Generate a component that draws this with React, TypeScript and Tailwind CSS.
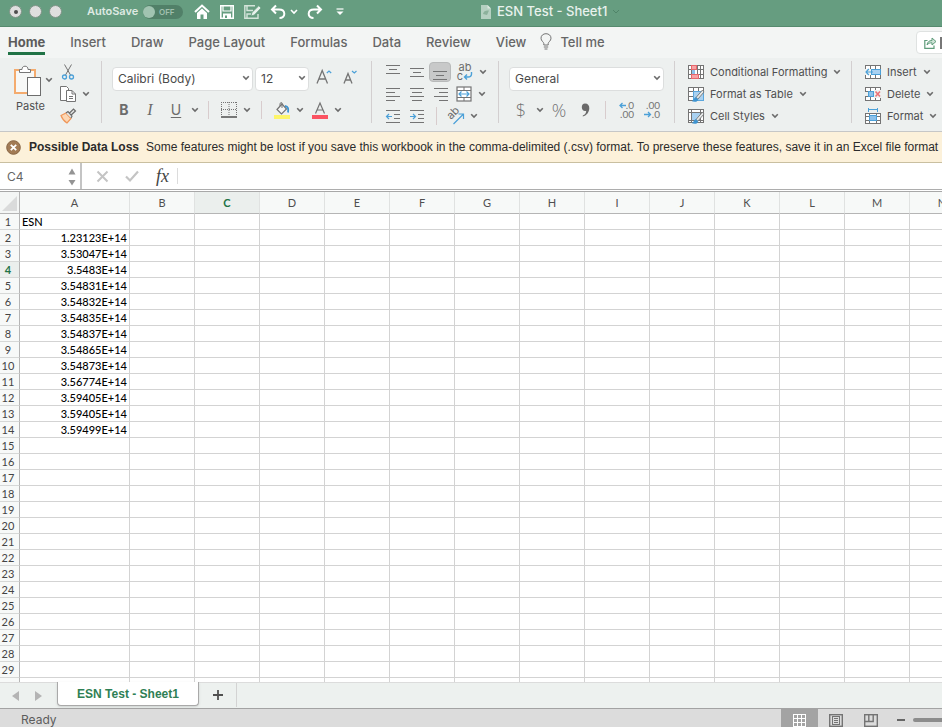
import { useState } from 'react';
import type { ReactNode } from 'react';

const tabs = ['Home', 'Insert', 'Draw', 'Page Layout', 'Formulas', 'Data', 'Review', 'View'];
const columns = ['A', 'B', 'C', 'D', 'E', 'F', 'G', 'H', 'I', 'J', 'K', 'L', 'M', 'N', 'O', 'P', 'Q', 'R', 'S', 'T'];
const values = [
  'ESN', '1.23123E+14', '3.53047E+14', '3.5483E+14', '3.54831E+14', '3.54832E+14', '3.54835E+14',
  '3.54837E+14', '3.54865E+14', '3.54873E+14', '3.56774E+14', '3.59405E+14', '3.59405E+14', '3.59499E+14',
];
const rowCount = 40;

const Icon = ({ w = 16, h = 16, children }: { w?: number; h?: number; children: ReactNode }) => (
  <svg width={w} height={h} viewBox={`0 0 ${w} ${h}`} fill="none" stroke="#747474" strokeWidth="1" className="shrink-0 overflow-visible" aria-hidden="true">
    {children}
  </svg>
);

const Chevron = () => (
  <Icon w={8} h={6}>
    <path d="M1.2 1.3 L4 4.1 L6.8 1.3" stroke="#6b6b6b" strokeWidth="1.6" />
  </Icon>
);

const MenuButton = ({ label }: { label: string }) => (
  <button aria-label={label} className="flex h-5 w-[14px] shrink-0 items-center justify-center">
    <Chevron />
  </button>
);

const Tool = ({ label, className = 'w-6', children }: { label: string; className?: string; children: ReactNode }) => (
  <button aria-label={label} className={`flex h-5 shrink-0 items-center justify-center rounded-sm ${className}`}>
    {children}
  </button>
);

const Divider = () => <div className="h-[62px] w-px shrink-0 bg-[#d3cfd0]" />;
const SmallDivider = ({ className = '' }: { className?: string }) => (
  <div className={`h-[18px] w-px shrink-0 bg-[#d8cccd] ${className}`} />
);

const Dropdown = ({ label, value, className }: { label: string; value: string; className: string }) => (
  <div className={`relative shrink-0 ${className}`}>
    <select aria-label={label} className="h-6 w-full appearance-none rounded-sm border border-[#dcdede] bg-white pl-[5px] text-[12px] text-[#4a4a4a]">
      <option>{value}</option>
    </select>
    <span className="pointer-events-none absolute right-[3px] top-[10px]">
      <Chevron />
    </span>
  </div>
);

const Lines = ({ rows }: { rows: [number, number, number][] }) => (
  <Icon>
    {rows.map(([y, x1, x2]) => (
      <path key={y} d={`M${x1} ${y + 0.5}H${x2}`} />
    ))}
  </Icon>
);

const IndentIcon = ({ out = false }: { out?: boolean }) => (
  <Icon>
    <path d="M1 2.5H15M9 6.5H15M9 10.5H15M1 14.5H15" />
    <path d={out ? 'M7 8.5H1.5M4 6L1.5 8.5L4 11' : 'M1 8.5H6.5M4 6L6.5 8.5L4 11'} stroke="#4ba0d8" strokeWidth="1.2" />
  </Icon>
);

const SheetGrid = () => (
  <>
    <rect x="0.5" y="1.5" width="15" height="13" fill="#fff" />
    <path d="M5.5 1.5V14.5M10.5 1.5V14.5M0.5 5.5H15.5M0.5 10.5H15.5" />
  </>
);

const StylePen = () => (
  <>
    <path d="M14.5 4 L8 11.5 L9.8 13.2 L16 6 Z" fill="#e6e9e9" stroke="#747474" strokeWidth="0.9" />
    <path d="M8 11.5 C6 11.4 6.4 14.3 4.3 15 C7 16 10 15.4 9.9 13.2 Z" fill="#3e94d0" stroke="#3e94d0" strokeWidth="0.6" />
  </>
);

const ConditionalIcon = () => (
  <Icon>
    <rect x="0.5" y="1.5" width="15" height="13" fill="#fff" />
    <path d="M3.5 1.5V14.5M9.5 1.5V14.5M12.5 1.5V14.5M0.5 5.5H15.5M0.5 10.5H15.5" />
    <rect x="3.5" y="1.5" width="5" height="4" fill="#f6a3a5" stroke="#e8666b" />
    <rect x="4" y="6" width="3" height="4" fill="#8dc1ea" stroke="none" />
    <rect x="3.5" y="10.5" width="7" height="4" fill="#f6a3a5" stroke="#e8666b" />
  </Icon>
);

const TableIcon = () => (
  <Icon>
    <SheetGrid />
    <rect x="5.5" y="5.5" width="10" height="9" fill="#a9d1f1" stroke="#5ba6dc" />
    <StylePen />
  </Icon>
);

const CellStylesIcon = () => (
  <Icon>
    <rect x="0.5" y="1.5" width="15" height="13" fill="#fff" />
    <path d="M3.5 1.5V14.5M12.5 1.5V14.5M0.5 4.5H15.5M0.5 12.5H15.5" />
    <rect x="3.5" y="4.5" width="9" height="8" fill="#a9d1f1" stroke="#747474" />
    <StylePen />
  </Icon>
);

const InsertIcon = () => (
  <Icon>
    <SheetGrid />
    <rect x="0" y="5" width="7" height="6" fill="#eef1f0" stroke="none" />
    <rect x="6.5" y="5.5" width="9" height="5" fill="#a9d1f1" stroke="#4ba0d8" />
    <path d="M8 8H1M3.8 5L1 8L3.8 11" stroke="#4ba0d8" strokeWidth="1.2" />
  </Icon>
);

const DeleteIcon = () => (
  <Icon>
    <SheetGrid />
    <rect x="9" y="4" width="7" height="8" fill="#eef1f0" stroke="none" />
    <path d="M0 5.5H8.5V10.5H0" fill="#eef1f0" />
    <rect x="3.5" y="5.5" width="5" height="5" fill="#8dc1ea" stroke="#4ba0d8" />
    <path d="M10.5 5.5L15 10.5M15 5.5L10.5 10.5" stroke="#ec7378" strokeWidth="1.6" />
  </Icon>
);

const FormatIcon = () => (
  <Icon>
    <path d="M3.5 0V4M12.5 0V4M3.5 1.5H12.5" stroke="#4ba0d8" />
    <rect x="0.5" y="5.5" width="15" height="10" fill="#fff" />
    <path d="M4.5 5.5V15.5M11.5 5.5V15.5M0.5 8.5H15.5M0.5 12.5H15.5" />
    <rect x="4.5" y="7.5" width="7" height="5" fill="#8dc1ea" stroke="#4ba0d8" />
  </Icon>
);

const LabeledMenu = ({ label, icon }: { label: string; icon: ReactNode }) => (
  <button className="flex h-[22px] items-center gap-[6px] text-[11px] text-[#4f4f4f]">
    {icon}
    <span>{label}</span>
    <Chevron />
  </button>
);

const TitleBar = ({ autoSave, onToggle }: { autoSave: boolean; onToggle: () => void }) => (
  <header className="flex h-[27px] shrink-0 items-center border-b border-[#568a6e] bg-[#669d80] pb-[3px] text-white">
    <div className="flex shrink-0 gap-[7px] pl-[9px]">
      {['Close', 'Minimize', 'Zoom'].map((name) => (
        <button key={name} aria-label={name} className="flex size-[13px] items-center justify-center rounded-full border border-[#7f9487] bg-[#dedfde]">
          {name === 'Close' && <span className="size-1 rounded-full bg-[#4d4d4d]" />}
        </button>
      ))}
    </div>
    <label className="ml-[25px] flex shrink-0 items-center gap-[6px] text-[11px] font-semibold text-[#dfeae3]">
      <span className="w-[50px]">AutoSave</span>
      <input type="checkbox" className="sr-only" checked={autoSave} onChange={onToggle} />
      <span className="flex h-[14px] w-10 items-center gap-1 rounded-full bg-[#518068] text-[8px] font-semibold text-[#a1c0af]">
        <span className="size-3 rounded-full bg-[#a1c4b1]" />
        {autoSave ? 'ON' : 'OFF'}
      </span>
    </label>
    <div className="ml-[11px] flex shrink-0 items-center">
      <button aria-label="Home" className="w-[25px]">
        <Icon>
          <path d="M1 8L8 1.5L15 8" stroke="#fff" strokeWidth="2" />
          <path d="M3 9L8 4.5L13 9V15H9.5V10.5H6.5V15H3Z" fill="#fff" stroke="none" />
        </Icon>
      </button>
      <button aria-label="Save" className="w-6">
        <Icon>
          <path d="M1.8 1.8H14.2V14.2H1.8Z" stroke="#fff" strokeWidth="1.6" />
          <path d="M4 2V7H12V2" stroke="#fff" strokeWidth="1.2" />
          <path d="M4 9.5H12V15H4Z" fill="#fff" stroke="none" />
          <path d="M6 11.5H8V14H6Z" fill="#669d80" stroke="none" />
        </Icon>
      </button>
      <button aria-label="Save and edit" className="w-[27px]">
        <Icon w={19}>
          <path d="M12 1.8H1.8V14.2H15V10M4 2V6.5H10M4 14V10H8" stroke="#d4e4da" strokeWidth="1.4" />
          <path d="M8 12L9 8.5L15.8 1.8L18 4L11.3 11Z" fill="#e8f1ec" stroke="#669d80" strokeWidth="0.7" />
        </Icon>
      </button>
      <button aria-label="Undo" className="w-5">
        <Icon>
          <path d="M6 1.5L2 5.5L6 9.5M2 5.5H9C16 5.5 16 14 9.5 14" stroke="#fff" strokeWidth="2" />
        </Icon>
      </button>
      <button aria-label="Undo history" className="w-[17px]">
        <Icon w={8} h={6}>
          <path d="M1 1L4 4L7 1" stroke="#fff" strokeWidth="1.6" />
        </Icon>
      </button>
      <button aria-label="Redo" className="w-[29px]">
        <Icon>
          <path d="M10 1.5L14 5.5L10 9.5M14 5.5H7C0 5.5 0 14 6.5 14" stroke="#fff" strokeWidth="2" />
        </Icon>
      </button>
      <button aria-label="Customize toolbar" className="w-3">
        <Icon w={8} h={8}>
          <path d="M0.5 1H7.5" stroke="#fff" strokeWidth="1.2" />
          <path d="M0.5 3.5H7.5L4 7Z" fill="#fff" stroke="none" />
        </Icon>
      </button>
    </div>
    <div className="ml-[132px] flex shrink-0 items-center gap-[5px] text-[13px] font-medium text-[#e9f2ed]">
      <Icon w={12} h={14}>
        <path d="M1 0H7.5L11 3.5V14H1Z" fill="#b5d0c1" stroke="none" />
        <path d="M7.5 0V3.5H11Z" fill="#dbe8e0" stroke="none" />
        <path d="M3 9C4 5.5 6 5.5 9 5.5L7 10Z" fill="#8bb19b" stroke="none" />
      </Icon>
      <h1>ESN Test - Sheet1</h1>
      <Icon w={8} h={6}>
        <path d="M1 1L4 4L7 1" stroke="#4f8468" />
      </Icon>
    </div>
  </header>
);

const RibbonTabs = () => (
  <nav className="flex h-[31px] shrink-0 items-start bg-[#f3f5f4] pl-2 text-[13px] font-medium text-[#666]">
    <div className="flex shrink-0 gap-[25px]">
      {tabs.map((tab) => (
        <a
          key={tab}
          href="#"
          className={`flex h-7 items-center border-b-3 pt-[6px] ${tab === 'Home' ? 'border-[#217346] font-bold text-[#5c5c5c]' : 'border-transparent'}`}
        >
          {tab}
        </a>
      ))}
    </div>
    <button className="ml-[14px] flex h-7 shrink-0 items-center gap-2">
      <Icon w={12} h={17}>
        <path d="M3.8 12V10.5C3.8 9 1 8 1 5.2C1 2.5 3.2 0.7 6 0.7C8.8 0.7 11 2.5 11 5.2C11 8 8.2 9 8.2 10.5V12Z" />
        <path d="M3.8 14H8.2M4.5 16H7.5" />
      </Icon>
      <span className="pt-[3px]">Tell me</span>
    </button>
    <button aria-label="Share" className="-mr-[38px] ml-auto mt-1 flex h-[23px] w-16 shrink-0 items-center rounded-sm border border-[#dfe2e1] bg-white pl-[7px]">
      <Icon w={13} h={13}>
        <path d="M3.5 4.5H0.8V12.3H10V9.5" stroke="#5f9c7b" strokeWidth="1.2" />
        <path d="M3 9C3.5 6 5 4.5 8 4.5V2L12 5.5L8 9V6.8C6 6.8 4.5 7.2 3 9Z" stroke="#5f9c7b" fill="#cfe3d7" />
      </Icon>
      <span className="ml-[3px] h-3 w-1 bg-[#777]" />
    </button>
  </nav>
);

const Ribbon = () => (
  <section aria-label="Home ribbon" className="flex h-[74px] shrink-0 items-start border-b border-[#c6c7c7] bg-[#edf0ef] pt-[3px]">
    <div className="flex w-[101px] shrink-0">
      <div className="flex items-start pl-3 pt-[4px]">
        <button className="w-9 text-[11px] leading-4 text-[#4f4f4f]">
          <Icon w={32} h={32}>
            <path d="M3 5H23V28H3Z" fill="#f7f8f7" stroke="#f4ab6e" strokeWidth="2" />
            <path d="M7.5 7.5V4.5H10C10 2.5 11 1.2 13 1.2C15 1.2 16 2.5 16 4.5H18.5V7.5Z" fill="#fff" stroke="#777" />
            <rect x="15.5" y="12.5" width="13" height="18" fill="#fff" stroke="#6d6d6d" />
          </Icon>
          <span className="mt-px ml-1 block text-left">Paste</span>
        </button>
        <span className="-ml-[6px] pt-[5px]"><MenuButton label="Paste options" /></span>
      </div>
      <div className="ml-px flex flex-col pt-px">
        <Tool label="Cut" className="w-[22px]">
          <Icon>
            <path d="M4.5 0.5L10.5 11M11.5 0.5L5.5 11" />
            <circle cx="4.5" cy="13" r="2" stroke="#4ba0d8" strokeWidth="1.3" />
            <circle cx="11.5" cy="13" r="2" stroke="#4ba0d8" strokeWidth="1.3" />
          </Icon>
        </Tool>
        <div className="flex py-[2px]">
          <Tool label="Copy" className="w-[22px]">
            <Icon>
              <path d="M6 14.5H0.5V0.5H6.5L8.5 2.5V4" fill="#fff" />
              <path d="M6.5 4.5H12L15.5 8V15.5H6.5Z" fill="#fff" />
              <path d="M12 4.5V8H15.5M9 10.5H13M9 12.5H13" />
            </Icon>
          </Tool>
          <MenuButton label="Copy options" />
        </div>
        <Tool label="Format painter" className="w-[22px]">
          <Icon>
            <path d="M1 7.5L6 5L11 10.5L7 15C4 13 2 10.5 1 7.5Z" fill="#fcd7b4" stroke="#f0975a" strokeWidth="1.2" />
            <path d="M6 5L8 3.5L12 8L11 10M9.5 5L13.5 1L15.5 3L11.2 7" fill="#e5e7e6" stroke="#6b6b6b" strokeWidth="1.2" />
          </Icon>
        </Tool>
      </div>
    </div>
    <Divider />
    <div className="flex w-[269px] shrink-0 flex-col gap-[9px] pl-[10px] pt-1">
      <div className="flex">
        <Dropdown label="Font" value="Calibri (Body)" className="w-[141px]" />
        <Dropdown label="Font size" value="12" className="ml-[2px] w-[54px]" />
        <Tool label="Increase font size" className="ml-[5px] w-5 pt-1">
          <Icon>
            <path d="M1 14.5L6.2 1.5L11.5 14.5M2.8 10H9.6" strokeWidth="1.3" />
            <path d="M10.8 4L13 2L15.2 4" stroke="#4ba0d8" strokeWidth="1.2" />
          </Icon>
        </Tool>
        <Tool label="Decrease font size" className="ml-[6px] w-5 pt-1">
          <Icon>
            <path d="M2 14.5L6 4.5L10 14.5M3.5 11H8.5" strokeWidth="1.3" />
            <path d="M10 2L12.3 4L14.5 2" stroke="#4ba0d8" strokeWidth="1.2" />
          </Icon>
        </Tool>
      </div>
      <div className="flex items-center text-[14px] leading-5 text-[#6c6c6c]">
        <Tool label="Bold"><span className="font-bold">B</span></Tool>
        <Tool label="Italic" className="ml-[2px] w-6"><span className="font-['Liberation_Serif',serif] text-[16px] italic">I</span></Tool>
        <Tool label="Underline" className="ml-[2px] w-6"><span className="underline underline-offset-2">U</span></Tool>
        <MenuButton label="Underline style" />
        <SmallDivider className="ml-[6px] mr-[9px]" />
        <Tool label="Borders" className="w-[22px]">
          <Icon>
            <path d="M0.5 0V14M15.5 0V14M8 0V14M0 0.5H16M0 7.5H16" strokeDasharray="1 1" />
            <path d="M0 15H16" stroke="#444" strokeWidth="1.4" />
          </Icon>
        </Tool>
        <MenuButton label="Border style" />
        <SmallDivider className="ml-[7px] mr-[9px]" />
        <Tool label="Fill color" className="w-[22px]">
          <Icon w={16} h={17}>
            <path d="M3 7.5L8 2L12.5 7L7.5 12Z" fill="#f5f6f6" strokeWidth="1.2" />
            <path d="M8 6V1C8 0.3 6 0.3 6 2V4" />
            <path d="M11 4C14.5 4.5 14.5 7 14 10.5" stroke="#3e94d0" strokeWidth="1.8" />
            <path d="M0 13H16V17H0Z" fill="#fdf569" stroke="none" />
          </Icon>
        </Tool>
        <MenuButton label="Fill color options" />
        <Tool label="Font color" className="ml-[2px] w-[22px]">
          <Icon w={16} h={17}>
            <path d="M3.5 11.5L8 1L12.5 11.5M5 8H11" strokeWidth="1.2" />
            <path d="M0 13H16V17H0Z" fill="#fb5362" stroke="none" />
          </Icon>
        </Tool>
        <MenuButton label="Font color options" />
      </div>
    </div>
    <Divider />
    <div className="flex w-[126px] shrink-0 flex-col gap-[2px] pl-[9px] pt-px">
      <div className="flex items-center">
        <Tool label="Align top"><Lines rows={[[1, 1, 15], [5, 4, 12], [9, 1, 15]]} /></Tool>
        <Tool label="Align middle"><Lines rows={[[4, 1, 15], [8, 4, 12], [12, 1, 15]]} /></Tool>
        <Tool label="Align bottom" className="w-[22px] border border-[#b8baba] bg-[#c8c9c9]"><Lines rows={[[7, 1, 15], [11, 4, 12], [15, 1, 15]]} /></Tool>
        <Tool label="Wrap text" className="ml-[3px] w-[22px]">
          <span className="flex flex-col text-[11px] leading-[9px] text-[#6c6c6c]">
            <span>ab</span>
            <span className="flex">
              c
              <Icon w={10} h={9}>
                <path d="M8.5 0V2C8.5 4 7.5 5 5 5H1.5M4 2.5L1.5 5L4 7.5" stroke="#4ba0d8" strokeWidth="1.4" />
              </Icon>
            </span>
          </span>
        </Tool>
        <MenuButton label="Wrap options" />
      </div>
      <div className="flex items-center">
        <Tool label="Align left"><Lines rows={[[2, 1, 15], [6, 1, 10], [10, 1, 15], [14, 1, 10]]} /></Tool>
        <Tool label="Align center"><Lines rows={[[2, 1, 15], [6, 3, 13], [10, 1, 15], [14, 3, 13]]} /></Tool>
        <Tool label="Align right"><Lines rows={[[2, 1, 15], [6, 6, 15], [10, 1, 15], [14, 6, 15]]} /></Tool>
        <Tool label="Merge cells" className="w-[22px]">
          <Icon>
            <rect x="1" y="1" width="14" height="14" fill="#fff" strokeWidth="1.2" />
            <path d="M8 1V4M8 12V15M1 4.5H15M1 11.5H15" />
            <path d="M3 8H13M5.5 5.5L3 8L5.5 10.5M10.5 5.5L13 8L10.5 10.5" stroke="#4ba0d8" strokeWidth="1.2" />
          </Icon>
        </Tool>
        <MenuButton label="Merge options" />
      </div>
      <div className="flex items-center">
        <Tool label="Decrease indent"><IndentIcon out /></Tool>
        <Tool label="Increase indent"><IndentIcon /></Tool>
        <SmallDivider className="ml-[7px] mr-2" />
        <Tool label="Orientation" className="w-[22px]">
          <Icon w={18} h={17}>
            <g transform="translate(4 12) rotate(-45)">
              <text x="0" y="0" fontSize="11" fill="#6c6c6c" stroke="none">ab</text>
            </g>
            <path d="M6.5 16L16 6.5M11.5 6H16.5V11" stroke="#4ba0d8" strokeWidth="1.2" />
          </Icon>
        </Tool>
        <MenuButton label="Orientation options" />
      </div>
    </div>
    <Divider />
    <div className="flex w-[175px] shrink-0 flex-col gap-[9px] pl-[10px] pt-1">
      <Dropdown label="Number format" value="General" className="w-[155px]" />
      <div className="flex items-center text-[#747474]">
        <Tool label="Currency"><span className="font-['Open_Sans',sans-serif] text-[18px] font-light">$</span></Tool>
        <MenuButton label="Currency options" />
        <Tool label="Percent"><span className="font-['Open_Sans',sans-serif] text-[18px] font-light">%</span></Tool>
        <Tool label="Comma style" className="ml-[2px] w-6">
          <Icon w={9} h={14}>
            <path d="M4 0.5C7 0.5 8.5 2.5 8.3 5.5C8 9.5 5.5 12.5 1.8 13.5V12.5C4 11.5 5.3 10 5.2 7.7C3 8.5 0.8 7 0.8 4.2C0.8 2 2 0.5 4 0.5Z" fill="#6a6a6a" stroke="none" />
          </Icon>
        </Tool>
        <SmallDivider className="ml-2 mr-2" />
        <Tool label="Increase decimal">
          <span className="flex w-4 flex-col items-end font-['Lato',sans-serif] text-[10px] leading-[9px]">
            <span className="flex items-center">
              <Icon w={7} h={7}><path d="M7 3.5H1M3.5 1L1 3.5L3.5 6" stroke="#4ba0d8" strokeWidth="1.3" /></Icon>
              .0
            </span>
            <span>.00</span>
          </span>
        </Tool>
        <Tool label="Decrease decimal" className="ml-[2px] w-6">
          <span className="flex w-4 flex-col items-end font-['Lato',sans-serif] text-[10px] leading-[9px]">
            <span>.00</span>
            <span className="flex items-center">
              <Icon w={8} h={7}><path d="M0 3.5H6.5M4 1L6.5 3.5L4 6" stroke="#4ba0d8" strokeWidth="1.3" /></Icon>
              .0
            </span>
          </span>
        </Tool>
      </div>
    </div>
    <Divider />
    <div className="flex w-[176px] shrink-0 flex-col pl-[13px]">
      <LabeledMenu label="Conditional Formatting" icon={<ConditionalIcon />} />
      <LabeledMenu label="Format as Table" icon={<TableIcon />} />
      <LabeledMenu label="Cell Styles" icon={<CellStylesIcon />} />
    </div>
    <Divider />
    <div className="flex shrink-0 flex-col pl-[13px]">
      <LabeledMenu label="Insert" icon={<InsertIcon />} />
      <LabeledMenu label="Delete" icon={<DeleteIcon />} />
      <LabeledMenu label="Format" icon={<FormatIcon />} />
    </div>
  </section>
);

const WarningBar = () => (
  <div role="alert" className="flex h-[31px] shrink-0 items-center border-b border-[#c9bfa0] bg-[#fcf1da] pl-[6px] font-['Liberation_Sans',sans-serif] text-[12px] text-[#2b2b2b]">
    <button aria-label="Dismiss" className="mr-2 shrink-0">
      <Icon w={15} h={15}>
        <circle cx="7.5" cy="7.5" r="6.8" fill="#a27b55" stroke="#876443" />
        <path d="M4.8 4.8L10.2 10.2M10.2 4.8L4.8 10.2" stroke="#fff" strokeWidth="1.8" />
      </Icon>
    </button>
    <strong className="mr-[7px] shrink-0">Possible Data Loss</strong>
    <span className="shrink-0">
      Some features might be lost if you save this workbook in the comma-delimited (.csv) format. To preserve these features, save it in an Excel file format
    </span>
  </div>
);

const FormulaBar = () => (
  <div className="flex h-[27px] shrink-0 items-center border-b border-[#adadad] bg-white">
    <div className="flex h-full w-[82px] shrink-0 items-center border-r-2 border-[#c4c4c4] pl-[7px] pr-1 pt-[2px]">
      <input aria-label="Name box" defaultValue="C4" className="w-full min-w-0 text-[12px] text-[#666] outline-none" />
      <Icon w={8} h={18}>
        <path d="M4 0.5L7.5 6.5H0.5Z" fill="#949494" stroke="none" />
        <path d="M4 17.5L7.5 12H0.5Z" fill="#949494" stroke="none" />
      </Icon>
    </div>
    <button aria-label="Cancel" className="ml-[14px]">
      <Icon w={13} h={13}><path d="M1.5 1.5L11.5 11.5M11.5 1.5L1.5 11.5" stroke="#c4c4c4" strokeWidth="2" /></Icon>
    </button>
    <button aria-label="Enter" className="ml-4">
      <Icon w={14} h={12}><path d="M1 6.5L5 10.5L13 1.5" stroke="#c4c4c4" strokeWidth="2.2" /></Icon>
    </button>
    <button aria-label="Insert function" className="ml-[17px] w-[21px] text-left font-['Liberation_Serif',serif] text-[18px] leading-5 italic text-[#444]">fx</button>
    <div className="h-4 w-px bg-[#dcdcdc]" />
    <input aria-label="Formula" className="ml-2 min-w-0 flex-1 text-[12px] outline-none" />
  </div>
);

const Sheet = () => (
  <main className="mt-px min-h-0 flex-1 overflow-hidden border-t border-[#a8a8a8] bg-white font-['Lato','Noto_Sans',sans-serif] text-[11px]">
    <table className="w-max table-fixed border-separate border-spacing-0">
      <colgroup>
        <col className="w-5" />
        {columns.map((c) => (
          <col key={c} className={c === 'A' ? 'w-[110px]' : 'w-[65px]'} />
        ))}
      </colgroup>
      <thead>
        <tr className="h-[22px]">
          <th aria-label="Select all" className="w-5 border-b border-r border-[#b5b5b5] bg-[#f4f6f5] p-0">
            <Icon w={19} h={20}><path d="M17 3V18H2Z" fill="#dadbdb" stroke="none" /></Icon>
          </th>
          {columns.map((c) => (
            <th
              key={c}
              className={`border-b border-r border-b-[#b5b5b5] border-r-[#e0e2e1] p-0 pt-[2px] ${c === 'A' ? 'w-[110px]' : 'w-[65px]'} ${c === 'C' ? 'bg-[#ebefed] font-bold text-[#217346]' : 'bg-[#f7f9f8] font-normal text-[#4f4f4f]'}`}
            >
              {c}
            </th>
          ))}
        </tr>
      </thead>
      <tbody>
        {Array.from({ length: rowCount }, (_, i) => (
          <tr key={i} className="h-4 leading-[15px]">
            <th className={`border-b border-r border-b-[#d6d8d7] border-r-[#b5b5b5] p-0 pr-[3px] ${i === 3 ? 'bg-[#ebefed] font-bold text-[#217346]' : 'bg-[#f7f9f8] font-normal text-[#444]'}`}>
              {i + 1}
            </th>
            {columns.map((c) => (
              <td key={c} className={`border-b border-r border-[#d3d3d3] p-0 px-[2px] font-medium text-black ${i === 0 ? 'text-left' : 'text-right'}`}>
                {c === 'A' ? values[i] : null}
              </td>
            ))}
          </tr>
        ))}
      </tbody>
    </table>
  </main>
);

const SheetTabs = () => (
  <div className="flex h-[26px] shrink-0 items-start border-t border-[#dcdcdc] bg-[#edf1ef]">
    <div className="flex h-full w-[57px] shrink-0 items-center gap-4 pl-3">
      <button aria-label="Previous sheet">
        <Icon w={7} h={10}><path d="M7 0V10L0 5Z" fill="#b4b4b4" stroke="none" /></Icon>
      </button>
      <button aria-label="Next sheet">
        <Icon w={7} h={10}><path d="M0 0V10L7 5Z" fill="#b4b4b4" stroke="none" /></Icon>
      </button>
    </div>
    <button className="-mt-px h-6 w-[142px] shrink-0 rounded-b-sm border-x border-b border-[#a9a9a9] bg-white text-[12px] font-bold text-[#2f8055] shadow-sm font-['Liberation_Sans',sans-serif]">
      ESN Test - Sheet1
    </button>
    <button aria-label="Add sheet" className="flex h-6 w-[38px] shrink-0 items-center justify-center border-r border-[#d3d3d3]">
      <Icon w={10} h={10}><path d="M5 0V10M0 5H10" stroke="#505050" strokeWidth="1.8" /></Icon>
    </button>
  </div>
);

const StatusBar = () => (
  <footer className="flex h-[19px] shrink-0 items-center border-t border-[#a3a3a3] bg-[#dcdcdc] text-[#5c5c5c]">
    <span className="pl-[21px] pt-1 text-[12px] leading-4">Ready</span>
    <div className="ml-auto flex h-full shrink-0 items-center">
      <button aria-label="Normal view" className="flex h-full w-[37px] items-center justify-center bg-[#a3a3a3] pt-1">
        <Icon w={13} h={13}>
          <rect x="0.5" y="0.5" width="12" height="12" stroke="#fff" />
          <path d="M4.5 0V13M8.5 0V13M0 4.5H13M0 8.5H13" stroke="#fff" />
        </Icon>
      </button>
      <button aria-label="Page layout view" className="flex w-9 items-center justify-center pt-1">
        <Icon w={14} h={13}>
          <rect x="0.7" y="0.7" width="12.6" height="11.6" strokeWidth="1.4" />
          <rect x="3.5" y="2.5" width="7" height="8" />
          <path d="M5 4.5H9M5 6.5H9M5 8.5H9" />
        </Icon>
      </button>
      <button aria-label="Page break view" className="flex w-[34px] items-center justify-center pt-1">
        <Icon w={14} h={13}>
          <rect x="0.7" y="0.7" width="12.6" height="11.6" strokeWidth="1.4" />
          <path d="M4.8 1V7.5H9.2V1M1 7.5H9.2" strokeWidth="1.4" />
        </Icon>
      </button>
      <button aria-label="Zoom out" className="ml-[9px] flex w-2 pt-1">
        <span className="h-[2px] w-2 bg-[#666]" />
      </button>
      <div className="ml-2 mt-1 h-1 w-[29px] rounded-l-full bg-[#8c8c8c]" />
    </div>
  </footer>
);

const App = () => {
  const [autoSave, setAutoSave] = useState(false);

  return (
    <div className="flex h-screen flex-col overflow-hidden whitespace-nowrap bg-white font-['Inter','Liberation_Sans',sans-serif]">
      <TitleBar autoSave={autoSave} onToggle={() => setAutoSave(!autoSave)} />
      <RibbonTabs />
      <Ribbon />
      <WarningBar />
      <FormulaBar />
      <Sheet />
      <SheetTabs />
      <StatusBar />
    </div>
  );
};

export default App;
